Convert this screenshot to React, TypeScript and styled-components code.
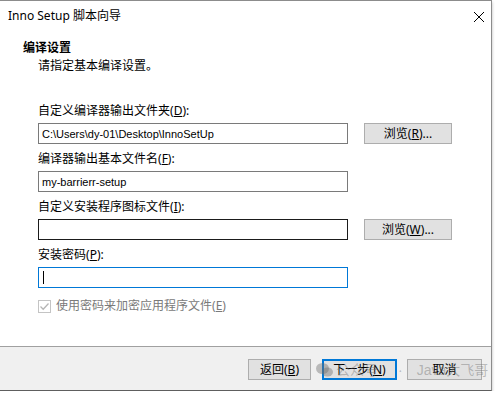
import styled, { createGlobalStyle } from 'styled-components'

const Global = createGlobalStyle`
    html, body {
        margin: 0;
        padding: 0;
        background: #ffffff;
    }
    body {
        font-family: "Noto Sans", "Noto Sans CJK SC", sans-serif;
        font-size: 12px;
        color: #000;
    }
`

const Window = styled.div`
    position: relative;
    box-sizing: border-box;
    width: 492px;
    height: 391px;
    display: flex;
    flex-direction: column;
    background: #fff;
    border-top: 1px solid #8c8c8c;
    border-right: 1px solid #8c8c8c;
    border-bottom: 1px solid #5e5e5e;
    box-shadow: 0 2px 3px rgba(0, 0, 0, 0.28);
`

const TitleBar = styled.div`
    height: 29px;
    display: flex;
    align-items: center;
    justify-content: space-between;
    padding: 0 6px 0 8px;
    font-size: 12px;
    line-height: 16px;
`

const CloseIcon = styled.svg`
    width: 12px;
    height: 12px;
    margin-top: 2px;
`

const Body = styled.div`
    height: 316px;
    padding: 10px 0 0 23px;
    box-sizing: border-box;
`

const PageTitle = styled.div`
    font-weight: 700;
    line-height: 16px;
`

const PageSub = styled.div`
    margin: 2px 0 0 15px;
    line-height: 16px;
`

const Form = styled.div`
    margin: 29px 0 0 15px;
    display: flex;
    flex-direction: column;
    gap: 7px;
`

const Field = styled.div`
    display: flex;
    flex-direction: column;
    gap: 4px;
`

const Label = styled.div`
    line-height: 16px;
    height: 16px;
`

const Row = styled.div`
    display: flex;
    align-items: flex-start;
    gap: 16px;
`

const Edit = styled.div<{ $state?: 'hover' | 'focus' }>`
    box-sizing: border-box;
    width: 310px;
    height: 21px;
    padding: 0 3px;
    display: flex;
    align-items: center;
    border: 1px solid
        ${p => (p.$state === 'focus' ? '#0078d7' : p.$state === 'hover' ? '#1b1b1b' : '#7a7a7a')};
    font-family: "Liberation Sans", "Noto Sans CJK SC", sans-serif;
    font-size: 11px;
    background: #fff;
`

const Caret = styled.span`
    display: block;
    width: 1px;
    height: 13px;
    margin-left: 1px;
    background: #000;
`

const Button = styled.div<{ $width: number; $default?: boolean }>`
    box-sizing: border-box;
    width: ${p => p.$width}px;
    height: 21px;
    display: flex;
    align-items: center;
    justify-content: center;
    background: #e1e1e1;
    border: ${p => (p.$default ? '2px solid #0078d7' : '1px solid #adadad')};
    font-size: 12px;
    line-height: 16px;
`

const CheckRow = styled.div`
    margin-top: 3px;
    display: flex;
    align-items: center;
    gap: 5px;
    color: #7a7a7a;
    line-height: 16px;
`

const CheckBox = styled.div`
    box-sizing: border-box;
    width: 13px;
    height: 13px;
    border: 1px solid #c4c4c4;
    display: flex;
    align-items: center;
    justify-content: center;
`

const Footer = styled.div`
    position: relative;
    flex: 1;
    background: #f0f0f0;
    border-top: 1px solid #a0a0a0;
    display: flex;
    justify-content: flex-end;
    align-items: flex-start;
    padding: 12px 9px 0 0;
`

const BackGroup = styled.div`
    display: flex;
    gap: 11px;
    margin-right: 10px;
`

const Watermark = styled.div`
    position: absolute;
    left: 316px;
    top: 14px;
    display: flex;
    align-items: center;
    color: rgba(110, 110, 110, 0.42);
    font-family: "Liberation Sans", "Noto Sans CJK SC", sans-serif;
    font-size: 14px;
    line-height: 18px;
    white-space: nowrap;
    pointer-events: none;
`

const MarkText = styled.span<{ $gap: number }>`
    margin-left: ${p => p.$gap}px;
`

function Key({ k }: { k: string }) {
    return (
        <>
            (<u>{k}</u>)
        </>
    )
}

export default function App() {
    return (
        <>
            <Global />
            <Window>
                <TitleBar>
                    <span>Inno Setup 脚本向导</span>
                    <CloseIcon viewBox="0 0 12 12">
                        <path d="M1 1 L11 11 M11 1 L1 11" stroke="#000" strokeWidth="1" fill="none" />
                    </CloseIcon>
                </TitleBar>

                <Body>
                    <PageTitle>编译设置</PageTitle>
                    <PageSub>请指定基本编译设置。</PageSub>

                    <Form>
                        <Field>
                            <Label>自定义编译器输出文件夹<Key k="D" />:</Label>
                            <Row>
                                <Edit>C:\Users\dy-01\Desktop\InnoSetUp</Edit>
                                <Button $width={88}>浏览<Key k="R" />...</Button>
                            </Row>
                        </Field>
                        <Field>
                            <Label>编译器输出基本文件名<Key k="F" />:</Label>
                            <Row>
                                <Edit>my-barrierr-setup</Edit>
                            </Row>
                        </Field>
                        <Field>
                            <Label>自定义安装程序图标文件<Key k="I" />:</Label>
                            <Row>
                                <Edit $state="hover" />
                                <Button $width={88}>浏览<Key k="W" />...</Button>
                            </Row>
                        </Field>
                        <Field>
                            <Label>安装密码<Key k="P" />:</Label>
                            <Row>
                                <Edit $state="focus">
                                    <Caret />
                                </Edit>
                            </Row>
                        </Field>
                        <CheckRow>
                            <CheckBox>
                                <svg width="11" height="11" viewBox="0 0 11 11">
                                    <path d="M1.5 5.5 L4.2 8.2 L9.5 2.5" stroke="#b5b5b5" strokeWidth="1.3" fill="none" />
                                </svg>
                            </CheckBox>
                            <span>使用密码来加密应用程序文件<Key k="E" /></span>
                        </CheckRow>
                    </Form>
                </Body>

                <Footer>
                    <BackGroup>
                        <Button $width={63}>返回<Key k="B" /></Button>
                        <Button $width={75} $default>下一步<Key k="N" /></Button>
                    </BackGroup>
                    <Button $width={75}>取消</Button>
                    <Watermark>
                        <svg width="17" height="16" viewBox="0 0 17 16">
                            <ellipse cx="6.5" cy="6.5" rx="6.5" ry="5.5" fill="rgba(110,110,110,0.42)" />
                            <ellipse cx="11.5" cy="10" rx="5.5" ry="4.6" fill="rgba(110,110,110,0.42)" />
                        </svg>
                        <MarkText $gap={3}>公众号</MarkText>
                        <MarkText $gap={20}>·</MarkText>
                        <MarkText $gap={14}>Java大飞哥</MarkText>
                    </Watermark>
                </Footer>
            </Window>
        </>
    )
}
